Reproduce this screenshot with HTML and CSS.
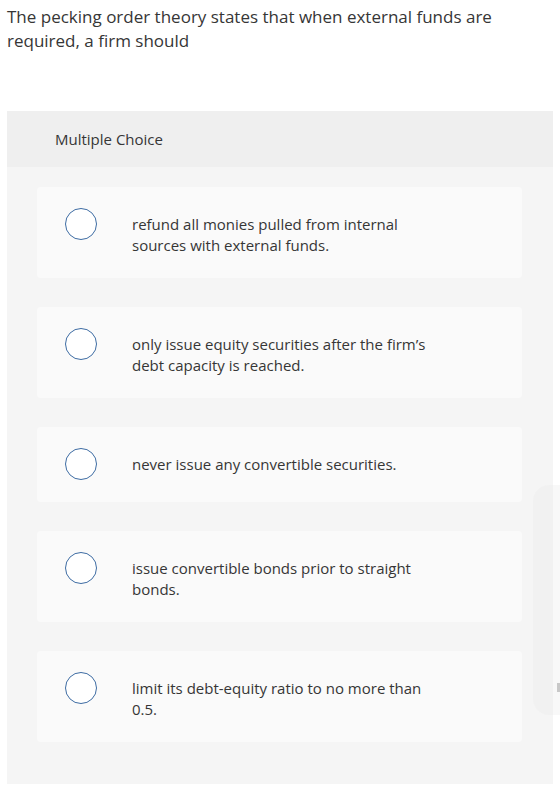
FILE: index.html
```html
<!DOCTYPE html>
<html lang="en">
<head>
    <meta charset="UTF-8">
    <meta name="viewport" content="width=device-width, initial-scale=1.0">
    <title>Multiple Choice</title>
    <link rel="stylesheet" href="styles.css">
</head>
<body>
    <div class="page">
        <p class="question">The pecking order theory states that when external funds are required, a firm should</p>

        <div class="panel">
            <div class="panel-header">Multiple Choice</div>
            <div class="choices">
                <label class="choice">
                    <span class="radio"></span>
                    <span class="choice-text">refund all monies pulled from internal sources with external funds.</span>
                </label>
                <label class="choice">
                    <span class="radio"></span>
                    <span class="choice-text">only issue equity securities after the firm’s debt capacity is reached.</span>
                </label>
                <label class="choice">
                    <span class="radio"></span>
                    <span class="choice-text">never issue any convertible securities.</span>
                </label>
                <label class="choice">
                    <span class="radio"></span>
                    <span class="choice-text">issue convertible bonds prior to straight bonds.</span>
                </label>
                <label class="choice">
                    <span class="radio"></span>
                    <span class="choice-text">limit its debt-equity ratio to no more than 0.5.</span>
                </label>
            </div>
        </div>
    </div>

    <!-- side tab peeking in from the right edge -->
    <div class="side-tab"><span class="side-tab-grip"></span></div>
</body>
</html>
```

FILE: styles.css
```css
body {
    margin: 0;
    background-color: #ffffff;
    color: #363636;
    font-family: 'Open Sans', 'Liberation Sans', sans-serif;
}

.page {
    padding: 5px 7px 5px 7px;
}

.question {
    margin: 0 0 58px 0;
    font-size: 17px;
    line-height: 24px;
    color: #363636;
}

.panel {
    background-color: #f5f5f5;
    padding-bottom: 42px;
}

.panel-header {
    background-color: #efefef;
    height: 56px;
    display: flex;
    align-items: center;
    padding-left: 48px;
    font-size: 15px;
    color: #363636;
}

.choices {
    display: flex;
    flex-direction: column;
    gap: 29px;
    padding: 20px 31px 0 30px;
}

.choice {
    display: flex;
    align-items: flex-start;
    box-sizing: border-box;
    min-height: 75px;
    background-color: #fafafa;
    border-radius: 4px;
    padding: 21px 20px 22px 28px;
    cursor: pointer;
}

.radio {
    flex: none;
    box-sizing: border-box;
    width: 32px;
    height: 32px;
    border: 1.5px solid #3e6ca3;
    border-radius: 50%;
    background-color: #ffffff;
}

.choice-text {
    margin: 6px 0 0 35px;
    max-width: 300px;
    font-size: 15px;
    line-height: 21px;
    color: #363636;
}

.side-tab {
    position: absolute;
    top: 485px;
    left: 533px;
    width: 40px;
    height: 230px;
    border-radius: 16px 0 0 16px;
    background-color: rgba(235, 235, 235, 0.35);
}

.side-tab-grip {
    position: absolute;
    top: 198px;
    left: 24px;
    width: 3px;
    height: 9px;
    background-color: #c8c8c8;
}
```
